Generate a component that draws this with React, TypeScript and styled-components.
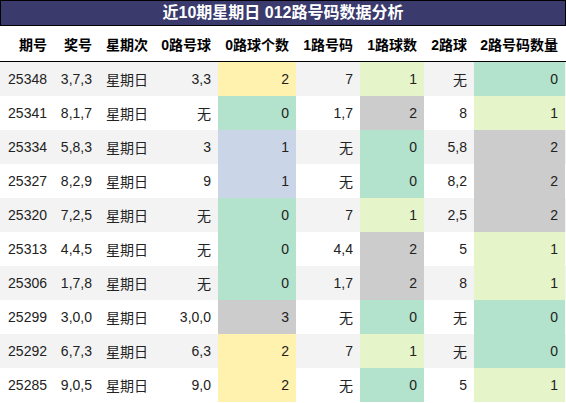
import React from "react";
import styled, { createGlobalStyle } from "styled-components";

const Global = createGlobalStyle`
  html, body { margin: 0; padding: 0; background: #ffffff; }
  body { font-family: "Liberation Sans", "Noto Sans CJK SC", sans-serif; }
`;

const COLS = "54px 45px 56px 63px 78px 64px 64px 50px 91px";

const Wrapper = styled.div`
  width: 566px;
  display: flex;
  flex-direction: column;
`;

const Title = styled.div`
  height: 24px;
  border: 1px solid #000000;
  background: #3b3a6d;
  color: #ffffff;
  font-weight: 700;
  font-size: 16px;
  line-height: 24px;
  text-align: center;
`;

const HeaderRow = styled.div`
  display: grid;
  grid-template-columns: ${COLS};
  height: 35px;
  border-bottom: 1px solid #000000;
  background: #ffffff;
`;

const HeaderCell = styled.div`
  display: flex;
  align-items: center;
  justify-content: flex-end;
  padding-right: 7px;
  font-size: 14px;
  font-weight: 700;
  color: #000000;
  white-space: nowrap;
`;

const Row = styled.div<{ $stripe: boolean }>`
  display: grid;
  grid-template-columns: ${COLS};
  height: 34px;
  background: ${(p) => (p.$stripe ? "#f3f3f3" : "#ffffff")};
`;

const Cell = styled.div<{ $bg?: string }>`
  display: flex;
  align-items: center;
  justify-content: flex-end;
  padding-right: 7px;
  font-size: 14px;
  color: #222222;
  white-space: nowrap;
  background: ${(p) => p.$bg ?? "transparent"};
`;

const C = {
  y: "#fff2ae",
  g: "#b3e2cd",
  l: "#e6f5c9",
  k: "#cccccc",
  b: "#cbd5e8",
};

type Rec = [string, string, string, string, string, keyof typeof C, string, string, keyof typeof C, string, string, keyof typeof C];

const data: Rec[] = [
  ["25348", "3,7,3", "星期日", "3,3", "2", "y", "7", "1", "l", "无", "0", "g"],
  ["25341", "8,1,7", "星期日", "无", "0", "g", "1,7", "2", "k", "8", "1", "l"],
  ["25334", "5,8,3", "星期日", "3", "1", "b", "无", "0", "g", "5,8", "2", "k"],
  ["25327", "8,2,9", "星期日", "9", "1", "b", "无", "0", "g", "8,2", "2", "k"],
  ["25320", "7,2,5", "星期日", "无", "0", "g", "7", "1", "l", "2,5", "2", "k"],
  ["25313", "4,4,5", "星期日", "无", "0", "g", "4,4", "2", "k", "5", "1", "l"],
  ["25306", "1,7,8", "星期日", "无", "0", "g", "1,7", "2", "k", "8", "1", "l"],
  ["25299", "3,0,0", "星期日", "3,0,0", "3", "k", "无", "0", "g", "无", "0", "g"],
  ["25292", "6,7,3", "星期日", "6,3", "2", "y", "7", "1", "l", "无", "0", "g"],
  ["25285", "9,0,5", "星期日", "9,0", "2", "y", "无", "0", "g", "5", "1", "l"],
];

const headers = ["期号", "奖号", "星期次", "0路号球", "0路球个数", "1路号码", "1路球数", "2路球", "2路号码数量"];

export default function App() {
  return (
    <Wrapper>
      <Global />
      <Title>近10期星期日 012路号码数据分析</Title>
      <HeaderRow>
        {headers.map((h) => (
          <HeaderCell key={h}>{h}</HeaderCell>
        ))}
      </HeaderRow>
      {data.map((r, i) => (
        <Row key={r[0]} $stripe={i % 2 === 0}>
          <Cell>{r[0]}</Cell>
          <Cell>{r[1]}</Cell>
          <Cell>{r[2]}</Cell>
          <Cell>{r[3]}</Cell>
          <Cell $bg={C[r[5]]}>{r[4]}</Cell>
          <Cell>{r[6]}</Cell>
          <Cell $bg={C[r[8]]}>{r[7]}</Cell>
          <Cell>{r[9]}</Cell>
          <Cell $bg={C[r[11]]}>{r[10]}</Cell>
        </Row>
      ))}
    </Wrapper>
  );
}
